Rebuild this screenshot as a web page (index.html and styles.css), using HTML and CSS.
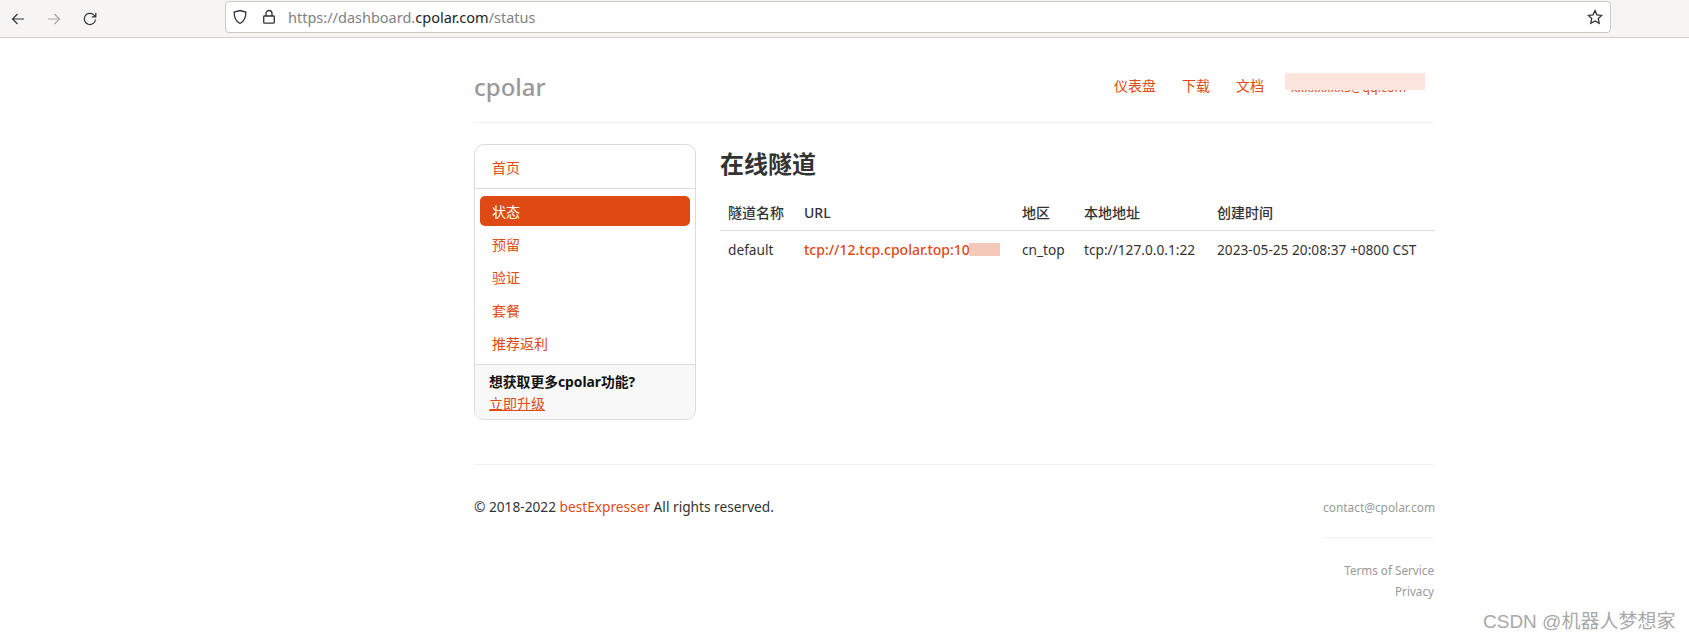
FILE: index.html
```html
<!DOCTYPE html>
<html lang="zh-CN">
<head>
<meta charset="UTF-8" />
<title>cpolar - 在线隧道</title>
<link rel="stylesheet" href="styles.css">
</head>
<body>
  <div class="toolbar">
    <svg class="tool-icon" viewBox="0 0 16 16"><path d="M14 8H2.5M7.5 3L2.5 8l5 5"/></svg>
    <svg class="tool-icon tool-off" viewBox="0 0 16 16"><path d="M2 8h11.5M8.5 3l5 5-5 5"/></svg>
    <svg class="tool-icon" viewBox="0 0 16 16"><path d="M13.5 8.5A5.6 5.6 0 1 1 11.5 3.6L13.6 5.6M13.8 1.8v4h-4"/></svg>
    <div class="urlbar">
      <svg class="url-icon" viewBox="0 0 16 16"><path d="M8 1.5l5.8 1.6c.2 5.6-1.6 9.4-5.8 11.4C3.800 12.500 2 8.700 2.200 3.100z"/></svg>
      <svg class="url-icon" viewBox="0 0 16 16"><path d="M5 7V4.500a3 3 0 0 1 6 0V7M3.500 7h9a.8.8 0 0 1 .8.8v5.400a1 1 0 0 1-1 1H3.700a1 1 0 0 1-1-1V7.800A.8.8 0 0 1 3.500 7z"/></svg>
      <span class="url-text">https://dashboard.<b>cpolar.com</b>/status</span>
      <svg class="url-icon url-star" viewBox="0 0 16 16"><path d="M8 1.500l2 4.300 4.700.6-3.400 3.200.9 4.700L8 12l-4.200 2.300.9-4.700L1.300 6.400 6 5.800z"/></svg>
    </div>
  </div>

  <div class="page">
    <header class="topbar">
      <a class="logo">cpolar</a>
      <nav class="topnav">
        <a>仪表盘</a>
        <a>下载</a>
        <a>文档</a>
        <a class="account">xxxxxxxx5@qq.com<span class="mask"></span></a>
      </nav>
    </header>

    <div class="main">
      <aside class="sidebar">
        <div class="side-home"><a>首页</a></div>
        <ul class="side-list">
          <li class="active"><a>状态</a></li>
          <li><a>预留</a></li>
          <li><a>验证</a></li>
          <li><a>套餐</a></li>
          <li><a>推荐返利</a></li>
        </ul>
        <div class="side-foot">
          <strong>想获取更多cpolar功能?</strong>
          <a class="upgrade">立即升级</a>
        </div>
      </aside>

      <section class="content">
        <h1>在线隧道</h1>
        <table class="tunnels">
          <colgroup>
            <col class="c-name"><col class="c-url"><col class="c-area"><col class="c-local"><col>
          </colgroup>
          <thead>
            <tr><th>隧道名称</th><th>URL</th><th>地区</th><th>本地地址</th><th>创建时间</th></tr>
          </thead>
          <tbody>
            <tr>
              <td>default</td>
              <td><a class="tcp">tcp://12.tcp.cpolar.top:10<span class="mask"></span></a></td>
              <td>cn_top</td>
              <td>tcp://127.0.0.1:22</td>
              <td>2023-05-25 20:08:37 +0800 CST</td>
            </tr>
          </tbody>
        </table>
      </section>
    </div>

    <footer class="footer">
      <p class="copy">© 2018-2022 <a>bestExpresser</a> All rights reserved.</p>
      <div class="foot-links">
        <div class="foot-mail">contact@cpolar.com</div>
        <div class="foot-more">
          <div>Terms of Service</div>
          <div>Privacy</div>
        </div>
      </div>
    </footer>
  </div>

  <div class="watermark">CSDN @机器人梦想家</div>
</body>
</html>
```

FILE: styles.css
```css
* {
  box-sizing: border-box;
}

html, body {
  height: 642px;
  overflow: hidden;
}

body {
  margin: 0;
  position: relative;
  background: #fff;
  color: #333;
  font-family: "Noto Sans", "Noto Sans CJK SC", sans-serif;
  font-size: 13.7px;
  line-height: 20px;
}

a {
  color: #e04a14;
}

/* browser bar */
.toolbar {
  height: 38px;
  display: flex;
  align-items: center;
  padding-left: 10px;
  background: #f6f5f4;
  border-bottom: 1px solid #d3cfc9;
}

.tool-icon {
  width: 16px;
  height: 16px;
  margin-right: 20px;
  fill: none;
  stroke: #2e3436;
  stroke-width: 1.2;
}

.tool-off {
  stroke: #a5a7a8;
}

.urlbar {
  width: 1386px;
  height: 32px;
  margin-left: 107px;
  margin-bottom: 3px;
  display: flex;
  align-items: center;
  gap: 13px;
  padding: 0 7px 0 6px;
  background: #fff;
  border: 1px solid #cdc9c3;
  border-radius: 4px;
}

.url-icon {
  width: 16px;
  height: 16px;
  flex: none;
  fill: none;
  stroke: #2e3436;
  stroke-width: 1.3;
}

.url-star {
  margin-left: auto;
}

.url-text {
  margin-left: -2px;
  color: #7f8284;
  font-size: 14.5px;
}

.url-text b {
  color: #1c1f21;
  font-weight: normal;
}

/* page */
.page {
  width: 960px;
  margin-left: 474px;
}

.topbar {
  height: 85px;
  display: flex;
  justify-content: space-between;
  border-bottom: 1px solid #f1f1f1;
}

.logo {
  margin-top: 33px;
  color: #999;
  font-size: 24px;
  font-weight: 500;
  line-height: 32px;
}

.topnav {
  display: flex;
  gap: 26px;
  margin-top: 38px;
  padding-right: 27px;
  font-size: 14px;
}

.account {
  position: relative;
  width: 116px;
  margin-left: 1px;
  padding-top: 2px;
  white-space: nowrap;
  font-size: 12.5px;
}

.account .mask {
  position: absolute;
  left: -6px;
  right: -18px;
  top: -3px;
  height: 17px;
  background: #fbe5dc;
}

.main {
  display: flex;
  gap: 24px;
  margin-top: 21px;
}

.sidebar {
  width: 222px;
  flex: none;
  height: 276px;
  border: 1px solid #dcdcdc;
  border-radius: 10px;
  overflow: hidden;
  font-size: 14px;
}

.side-home {
  height: 44px;
  padding: 13px 17px 0;
  border-bottom: 1px solid #dcdcdc;
}

.side-list {
  list-style: none;
  margin: 0;
  padding: 7px 5px 6px;
  display: flex;
  flex-direction: column;
  gap: 3px;
}

.side-list li {
  height: 30px;
  padding: 6px 12px 0;
  border-radius: 5px;
}

.side-list .active {
  background: #df4913;
}

.side-list .active a {
  color: #fff;
}

.side-foot {
  height: 55px;
  padding: 6px 14px 0;
  background: #f8f8f8;
  border-top: 1px solid #dcdcdc;
  color: #111;
  line-height: 22px;
}

.side-foot strong, .upgrade {
  display: block;
}

.side-foot strong {
  font-size: 13.8px;
  white-space: nowrap;
}

.upgrade {
  text-decoration: underline;
}

.content {
  flex: 1;
}

.content h1 {
  margin: 4px 0 0;
  font-size: 24px;
  line-height: 32px;
  font-weight: 700;
}

.tunnels {
  width: 714px;
  margin-top: 16px;
  border-collapse: collapse;
  table-layout: fixed;
}

.c-name { width: 76px; }
.c-url { width: 218px; }
.c-area { width: 62px; }
.c-local { width: 133px; }

.tunnels th {
  height: 34px;
  padding: 0 8px;
  text-align: left;
  font-size: 14px;
  font-weight: 500;
  border-bottom: 1px solid #ddd;
}

.tunnels td {
  height: 39px;
  padding: 0 8px;
  white-space: nowrap;
}

.tcp {
  position: relative;
  display: inline-block;
  width: 196px;
  font-size: 14px;
  font-weight: 500;
}

.tcp .mask {
  position: absolute;
  left: 165px;
  top: 3px;
  width: 31px;
  height: 13px;
  background: #f4c9b9;
}

.footer {
  display: flex;
  justify-content: space-between;
  margin-top: 44px;
  padding-top: 32px;
  border-top: 1px solid #f1f1f1;
}

.copy {
  margin: 0;
}

.foot-links {
  width: 111px;
  text-align: right;
  color: #999;
  font-size: 11.9px;
}

.foot-mail {
  height: 41px;
  white-space: nowrap;
  border-bottom: 1px solid #f1f1f1;
}

.foot-more {
  padding-top: 22px;
  font-size: 11.7px;
  line-height: 21px;
}

.watermark {
  position: absolute;
  left: 1483px;
  top: 611px;
  color: #a8a8a8;
  font-family: "Liberation Sans", "Noto Sans CJK SC", sans-serif;
  font-size: 19px;
  line-height: 22px;
  white-space: nowrap;
}
```
